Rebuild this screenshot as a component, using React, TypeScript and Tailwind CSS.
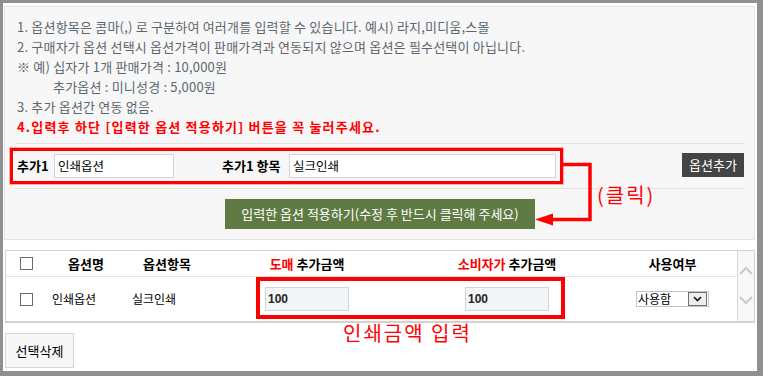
import React from "react";

const KR = "font-['Noto_Sans_CJK_KR',sans-serif]";

function CheckBox() {
  return <div className="w-[13px] h-[13px] border border-[#6b6b6b] bg-white" />;
}

function Chevron({ down = false }: { down?: boolean }) {
  return (
    <svg width="14" height="10" viewBox="0 0 14 10">
      <path
        d={down ? "M1 2 L7 8 L13 2" : "M1 8 L7 2 L13 8"}
        fill="none"
        stroke="#c9c9c9"
        strokeWidth="2"
      />
    </svg>
  );
}

export default function App() {
  return (
    <div
      className={`relative w-[763px] h-[376px] bg-white border-t-[3px] border-l-[3px] border-r-[6px] border-b-[5px] border-[#909090] flex flex-col ${KR}`}
    >
      {/* top panel */}
      <div className="mt-[3px] ml-[1px] w-[751px] h-[234px] bg-[#f7f7f7] border border-[#e4e4e4] flex flex-col">
        <div className="pl-[12px] pt-[10px] text-[13px] leading-[20px] tracking-[0.2px] text-[#5b6770]">
          <p>1. 옵션항목은 콤마(,) 로 구분하여 여러개를 입력할 수 있습니다. 예시) 라지,미디움,스몰</p>
          <p>2. 구매자가 옵션 선택시 옵션가격이 판매가격과 연동되지 않으며 옵션은 필수선택이 아닙니다.</p>
          <p>※ 예) 십자가 1개 판매가격 : 10,000원</p>
          <p className="pl-[36px]">추가옵션 : 미니성경 : 5,000원</p>
          <p>3. 추가 옵션간 연동 없음.</p>
          <p className="font-bold text-[#ff0000] tracking-[1.2px]">
            4.입력후 하단 [입력한 옵션 적용하기] 버튼을 꼭 눌러주세요.
          </p>
        </div>
        <div className="mt-[6px] ml-[10px] mr-[9px] h-px bg-[#e3e3e3]" />
        <div className="flex items-start">
          <div className="mt-[4px] ml-[5px] w-[553px] h-[36px] border-[3px] border-[#ff0000] shadow-[0_0_0_1px_rgba(255,90,90,0.45)] flex items-center pl-[4px]">
            <span className="w-[37px] text-[13px] font-bold text-black">추가1</span>
            <div className="w-[120px] h-[24px] bg-white border border-[#cfd6db] flex items-center pl-[3px] text-[12.5px] text-black">
              인쇄옵션
            </div>
            <span className="ml-[48px] w-[67px] text-[13px] font-bold text-black">추가1 항목</span>
            <div className="w-[267px] h-[24px] bg-white border border-[#cfd6db] flex items-center pl-[3px] text-[12.5px] text-black">
              실크인쇄
            </div>
          </div>
          <div className="ml-auto mr-[10px] mt-[9px] w-[62px] h-[24px] bg-[#444444] text-white text-[13px] flex items-center justify-center">
            옵션추가
          </div>
        </div>
        <div className="mt-[4px] ml-[10px] mr-[9px] h-px bg-[#e3e3e3]" />
        <div className="mt-[10px] ml-[220px] w-[310px] h-[30px] bg-[#5f7b43] text-white text-[13px] flex items-center justify-center">
          입력한 옵션 적용하기(수정 후 반드시 클릭해 주세요)
        </div>
      </div>

      {/* table */}
      <div className="mt-[10px] ml-[2px] w-[750px] border border-b-2 border-[#d2d2d2] flex">
        <div className="w-[731px] flex flex-col">
          <div className="h-[26px] border-b border-[#e6e6e6] grid grid-cols-[40px_80px_82px_198px_202px_129px] items-center text-[13px] font-bold text-black">
            <div className="flex justify-center">
              <CheckBox />
            </div>
            <div className="text-center">옵션명</div>
            <div className="text-center">옵션항목</div>
            <div className="text-center">
              <span className="text-[#ff0000]">도매</span> 추가금액
            </div>
            <div className="text-center">
              <span className="text-[#ff0000]">소비자가</span> 추가금액
            </div>
            <div className="text-center">사용여부</div>
          </div>
          <div className="h-[44px] grid grid-cols-[40px_80px_82px_198px_202px_129px] items-center text-[12px] text-black">
            <div className="flex justify-center">
              <CheckBox />
            </div>
            <div className="pl-[6px]">인쇄옵션</div>
            <div className="pl-[6px]">실크인쇄</div>
            <div className="flex justify-center">
              <div className="w-[84px] h-[24px] bg-[#f3f6f7] border border-[#cbd6da] flex items-center pl-[2px] font-['Liberation_Sans',sans-serif] font-bold text-[12px] text-[#222]">
                100
              </div>
            </div>
            <div className="flex justify-center">
              <div className="w-[84px] h-[24px] bg-[#f3f6f7] border border-[#cbd6da] flex items-center pl-[2px] font-['Liberation_Sans',sans-serif] font-bold text-[12px] text-[#222]">
                100
              </div>
            </div>
            <div className="flex justify-center">
              <div className="w-[73px] h-[16px] bg-white border border-[#b8c6d0] flex items-center justify-between pl-[1px] pr-px">
                <span className="text-[12px] leading-none">사용함</span>
                <div className="w-[19px] h-[14px] bg-[#ededed] border border-[#6f6f6f] flex items-center justify-center">
                  <svg width="9" height="6" viewBox="0 0 9 6">
                    <path d="M1 1 L4.5 4.5 L8 1" fill="none" stroke="#111" strokeWidth="1.6" />
                  </svg>
                </div>
              </div>
            </div>
          </div>
        </div>
        <div className="w-[17px] border-l border-[#d8d8d8] bg-[#f8f8f8] flex flex-col items-center pt-[15px] gap-[19px]">
          <Chevron />
          <Chevron down />
        </div>
      </div>

      {/* bottom button */}
      <div className="mt-[10px] ml-[2px] w-[69px] h-[35px] bg-[#f7f7f7] border border-[#d6d6d6] flex items-center justify-center text-[13px] text-black">
        선택삭제
      </div>

      {/* annotations */}
      <svg className="absolute left-[527px] top-[152px]" width="70" height="75" viewBox="0 0 70 75">
        <polyline
          points="33,9.5 60,9.5 60,64.5 20,64.5"
          fill="none"
          stroke="#ff0000"
          strokeWidth="3.5"
          strokeLinejoin="miter"
        />
        <polygon points="5,64.5 23,58.5 23,70.5" fill="#ff0000" />
      </svg>
      <div className="absolute left-[594px] top-[180px] text-[20px] leading-[24px] tracking-[2px] text-[#ff0000]">
        (클릭)
      </div>
      <div className="absolute left-[253px] top-[274px] w-[309px] h-[42px] border-4 border-[#ff0000]" />
      <div className="absolute left-[340px] top-[318px] text-[20px] leading-[24px] tracking-[2px] text-[#ff0000]">
        인쇄금액 입력
      </div>
    </div>
  );
}
